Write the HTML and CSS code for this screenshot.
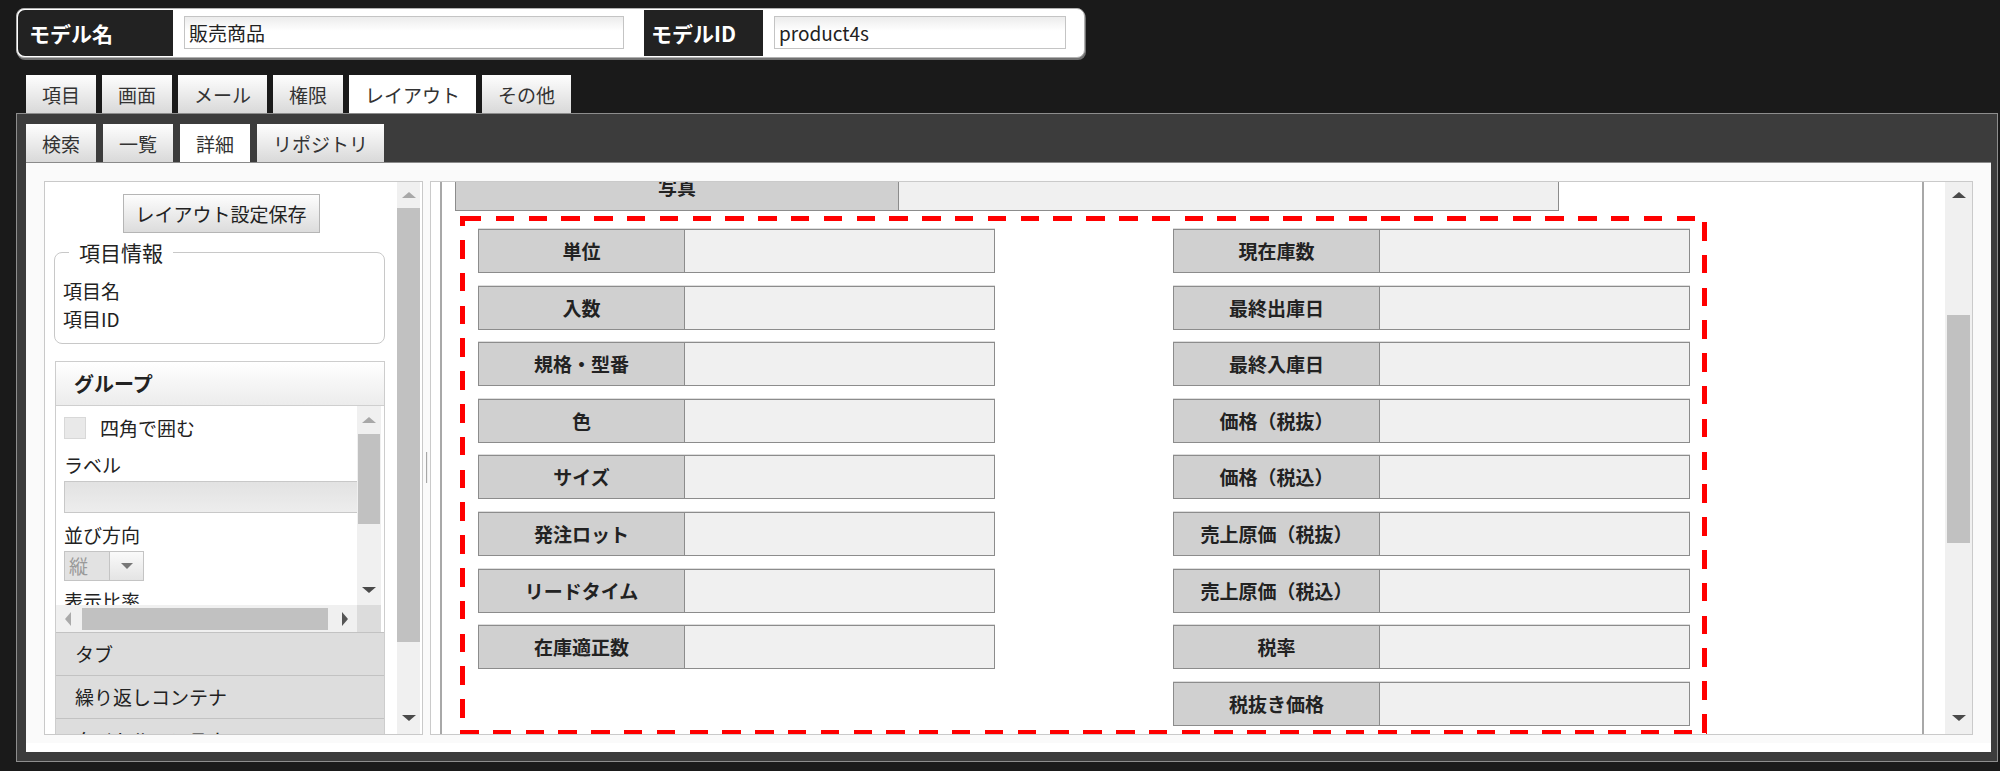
FILE: index.html
```html
<!DOCTYPE html>
<html lang="ja">
<head>
    <meta charset="UTF-8">
    <title>レイアウト</title>
    <link rel="stylesheet" href="styles.css">
</head>
<body>
    <div class="model-bar">
        <div class="model-label name-label">モデル名</div>
        <div class="model-input name-input">販売商品</div>
        <div class="model-label id-label">モデルID</div>
        <div class="model-input id-input">product4s</div>
    </div>

    <ul class="tabs main-tabs">
        <li class="tab">項目</li>
        <li class="tab">画面</li>
        <li class="tab">メール</li>
        <li class="tab">権限</li>
        <li class="tab active">レイアウト</li>
        <li class="tab">その他</li>
    </ul>

    <div class="panel">
        <ul class="tabs sub-tabs">
            <li class="tab">検索</li>
            <li class="tab">一覧</li>
            <li class="tab active">詳細</li>
            <li class="tab">リポジトリ</li>
        </ul>

        <div class="workspace">
            <div class="work-inner">
                <!-- left settings panel -->
                <div class="side">
                    <div class="side-body">
                        <button class="save-btn">レイアウト設定保存</button>

                        <fieldset class="info">
                            <legend>項目情報</legend>
                            <div class="info-line">項目名</div>
                            <div class="info-line">項目ID</div>
                        </fieldset>

                        <div class="group">
                            <div class="group-head">グループ</div>
                            <div class="group-body">
                                <div class="group-scroll">
                                    <div class="check-row">
                                        <span class="checkbox"></span>
                                        <span>四角で囲む</span>
                                    </div>
                                    <div class="field-label">ラベル</div>
                                    <div class="text-field"></div>
                                    <div class="field-label">並び方向</div>
                                    <div class="select">
                                        <span class="select-value">縦</span>
                                        <span class="select-arrow"></span>
                                    </div>
                                    <div class="field-label last">表示比率</div>
                                </div>
                                <div class="sb small">
                                    <div class="sb-btn up off"></div>
                                    <div class="sb-thumb"></div>
                                    <div class="sb-btn down"></div>
                                </div>
                                <div class="hsb">
                                    <div class="hsb-btn left off"></div>
                                    <div class="hsb-thumb"></div>
                                    <div class="hsb-btn right"></div>
                                </div>
                                <div class="corner"></div>
                            </div>
                            <div class="acc-head">タブ</div>
                            <div class="acc-head">繰り返しコンテナ</div>
                            <div class="acc-head">タイトルコンテナ</div>
                        </div>
                    </div>
                    <div class="sb side-sb">
                        <div class="sb-btn up off"></div>
                        <div class="sb-thumb"></div>
                        <div class="sb-btn down"></div>
                    </div>
                </div>

                <div class="splitter"><span class="grip"></span></div>

                <!-- layout canvas -->
                <div class="stage">
                    <div class="viewport">
                        <div class="canvas">
                            <div class="photo-row">
                                <div class="lbl">写真</div>
                                <div class="val"></div>
                            </div>

                            <div class="dash-box">
                                <div class="field-col">
                                    <div class="field-row"><div class="lbl">単位</div></div>
                                    <div class="field-row"><div class="lbl">入数</div></div>
                                    <div class="field-row"><div class="lbl">規格・型番</div></div>
                                    <div class="field-row"><div class="lbl">色</div></div>
                                    <div class="field-row"><div class="lbl">サイズ</div></div>
                                    <div class="field-row"><div class="lbl">発注ロット</div></div>
                                    <div class="field-row"><div class="lbl">リードタイム</div></div>
                                    <div class="field-row"><div class="lbl">在庫適正数</div></div>
                                </div>
                                <div class="field-col">
                                    <div class="field-row"><div class="lbl">現在庫数</div></div>
                                    <div class="field-row"><div class="lbl">最終出庫日</div></div>
                                    <div class="field-row"><div class="lbl">最終入庫日</div></div>
                                    <div class="field-row"><div class="lbl">価格（税抜）</div></div>
                                    <div class="field-row"><div class="lbl">価格（税込）</div></div>
                                    <div class="field-row"><div class="lbl">売上原価（税抜）</div></div>
                                    <div class="field-row"><div class="lbl">売上原価（税込）</div></div>
                                    <div class="field-row"><div class="lbl">税率</div></div>
                                    <div class="field-row"><div class="lbl">税抜き価格</div></div>
                                </div>
                            </div>
                        </div>
                    </div>
                    <div class="sb main-sb">
                        <div class="sb-btn up"></div>
                        <div class="sb-thumb"></div>
                        <div class="sb-btn down"></div>
                    </div>
                </div>
            </div>
        </div>
    </div>
</body>
</html>
```

FILE: styles.css
```css
* {
    box-sizing: border-box;
}

body {
    margin: 0;
    width: 2000px;
    height: 771px;
    overflow: hidden;
    background-color: #1a1a1a;
    font-family: "Noto Sans CJK JP", "Liberation Sans", sans-serif;
    font-size: 19px;
    color: #222;
}

/* header */
.model-bar {
    display: flex;
    align-items: flex-start;
    margin: 8px 0 0 16px;
    width: 1069px;
    height: 50px;
    padding: 1px;
    background: #fff;
    border: 1px solid #b0b0b0;
    border-radius: 8px;
    box-shadow: 1px 2px 0 #707070;
}

.model-label {
    height: 46px;
    line-height: 46px;
    padding-left: 11px;
    background: #222;
    color: #fff;
    font-weight: bold;
    font-size: 21px;
}

.name-label {
    width: 155px;
    border-radius: 7px 0 0 7px;
}

.id-label {
    width: 119px;
    margin-left: 20px;
    padding-left: 7px;
}

.model-input {
    margin: 6px 0 0 11px;
    height: 33px;
    line-height: 31px;
    padding-left: 4px;
    border: 1px solid #c4c4c4;
    background: linear-gradient(#ececec, #fff 45%);
    color: #222;
}

.name-input {
    width: 440px;
}

.id-input {
    width: 292px;
}

/* tabs */
.tabs {
    list-style: none;
    margin: 0;
    padding: 0;
    display: flex;
    gap: 6px;
}

.main-tabs {
    margin: 17px 0 0 26px;
}

.sub-tabs {
    gap: 7px;
}

.tab {
    height: 38px;
    padding: 0 16px;
    display: flex;
    align-items: center;
    background: linear-gradient(#fefefe, #d9d9d9);
    color: #333;
}

.tab.active {
    background: #fff;
}

/* panel */
.panel {
    margin-left: 16px;
    width: 1982px;
    height: 649px;
    padding: 10px 6px 9px 9px;
    border: 1px solid #8d8d8d;
    background: #3c3c3c;
}

.workspace {
    height: 590px;
    padding-bottom: 9px;
    background: #fff;
    border-top: 1px solid #8a8a8a;
}

.work-inner {
    display: flex;
    height: 100%;
    padding: 18px 18px 8px 18px;
    background: #fafafa;
}

/* left side */
.side {
    display: flex;
    width: 379px;
    padding-right: 2px;
    border: 1px solid #c9c9c9;
    background: #fff;
    overflow: hidden;
}

.side-body {
    flex: 1;
    overflow: hidden;
}

.save-btn {
    display: block;
    margin: 12px auto 0;
    width: 197px;
    height: 39px;
    padding: 0;
    border: 1px solid #b5b5b5;
    background: linear-gradient(#fdfdfd, #dcdcdc);
    font-family: inherit;
    font-size: 19px;
    color: #222;
}

.info {
    margin: 8px 12px 0 9px;
    padding: 14px 8px 10px;
    min-width: 0;
    border: 1px solid #c8c8c8;
    border-radius: 8px;
}

.info legend {
    margin-left: 6px;
    padding: 0 10px;
    font-size: 21px;
    line-height: 22px;
}

.info-line {
    line-height: 28px;
}

.group {
    margin: 17px 12px 0 10px;
    border: 1px solid #cdcdcd;
}

.group-head {
    height: 44px;
    line-height: 43px;
    padding-left: 18px;
    border-bottom: 1px solid #cfcfcf;
    background: linear-gradient(#fff, #ececec);
    font-weight: bold;
    font-size: 20px;
}

.group-body {
    display: grid;
    grid-template-columns: 1fr 24px;
    grid-template-rows: 1fr 27px;
    height: 226px;
    padding-right: 3px;
}

.group-scroll {
    overflow: hidden;
    padding-left: 8px;
}

.check-row {
    display: flex;
    align-items: center;
    gap: 14px;
    margin-top: 11px;
    height: 22px;
    line-height: 22px;
}

.checkbox {
    width: 22px;
    height: 22px;
    border: 1px solid #d8d8d8;
    background: #e9e9e9;
}

.field-label {
    margin-top: 13px;
    line-height: 26px;
    white-space: nowrap;
}

.text-field + .field-label {
    margin-top: 9px;
}

.field-label.last {
    margin-top: 7px;
}

.text-field {
    margin-top: 3px;
    width: 330px;
    height: 32px;
    border: 1px solid #c8c8c8;
    background: linear-gradient(#e2e2e2, #ededed);
}

.select {
    display: flex;
    margin-top: 3px;
    width: 80px;
    height: 30px;
    border: 1px solid #c4c4c4;
    background: #e2e2e2;
}

.select-value {
    width: 45px;
    padding-left: 4px;
    line-height: 28px;
    border-right: 1px solid #c4c4c4;
    color: #9a9a9a;
}

.select-arrow {
    flex: 1;
    display: flex;
    align-items: center;
    justify-content: center;
    background: linear-gradient(#fafafa, #e4e4e4);
}

.select-arrow::before {
    content: "";
    border-left: 6px solid transparent;
    border-right: 6px solid transparent;
    border-top: 6px solid #777;
}

.acc-head {
    height: 43px;
    line-height: 42px;
    padding-left: 19px;
    border-top: 1px solid #c2c2c2;
    background: #dddddd;
    white-space: nowrap;
}

/* scrollbars */
.sb {
    display: flex;
    flex-direction: column;
    background: #f0f0f0;
}

.sb-btn {
    height: 26px;
    display: flex;
    align-items: center;
    justify-content: center;
    color: #4a4a4a;
}

.sb-btn.off {
    color: #a8a8a8;
}

.sb-btn.up::before {
    content: "";
    border-left: 7px solid transparent;
    border-right: 7px solid transparent;
    border-bottom: 6px solid currentColor;
}

.sb-btn.down {
    margin-top: auto;
}

.sb-btn.down::before {
    content: "";
    border-left: 7px solid transparent;
    border-right: 7px solid transparent;
    border-top: 6px solid currentColor;
}

.sb-thumb {
    background: #c1c1c1;
}

.side-sb {
    width: 23px;
    padding-bottom: 3px;
}

.side-sb .sb-thumb {
    height: 434px;
}

.small .sb-btn.up {
    height: 28px;
}

.small .sb-thumb {
    height: 90px;
    margin: 0 1px;
}

.small .sb-btn.down {
    padding-bottom: 4px;
}

.hsb {
    display: flex;
    align-items: center;
    background: #f0f0f0;
}

.hsb-btn {
    width: 24px;
    height: 100%;
    display: flex;
    align-items: center;
    justify-content: center;
    color: #555;
}

.hsb-btn.off {
    color: #aaa;
}

.hsb-btn.left::before {
    content: "";
    border-top: 7px solid transparent;
    border-bottom: 7px solid transparent;
    border-right: 6px solid currentColor;
}

.hsb-btn.right {
    margin-left: auto;
}

.hsb-btn.right::before {
    content: "";
    border-top: 7px solid transparent;
    border-bottom: 7px solid transparent;
    border-left: 6px solid currentColor;
}

.hsb-thumb {
    margin-left: 2px;
    width: 246px;
    height: 22px;
    background: #c1c1c1;
}

.corner {
    background: #dcdcdc;
}

/* splitter */
.splitter {
    width: 7px;
    display: flex;
    justify-content: center;
    align-items: center;
}

.grip {
    margin-top: 18px;
    width: 1px;
    height: 31px;
    background: #a8a8a8;
    box-shadow: 1px 0 0 #eee;
}

/* layout stage */
.stage {
    flex: 1;
    display: flex;
    border: 1px solid #cacaca;
    background: #fff;
}

.viewport {
    flex: 1;
    overflow: hidden;
}

.main-sb {
    width: 27px;
    padding-bottom: 3px;
}

.main-sb .sb-thumb {
    margin: 107px 2px 0;
    height: 228px;
}

.canvas {
    margin: -15px 0 0 9px;
    width: 1484px;
    height: 800px;
    padding-left: 13px;
    border-left: 2px solid #a8a8a8;
    border-right: 2px solid #a8a8a8;
}

.photo-row,
.field-row {
    display: flex;
    height: 44px;
    border: 1px solid #8c8c8c;
    background: #f0f0f0;
    box-shadow: 0 -1px 0 #dedede;
}

.photo-row {
    width: 1104px;
}

.lbl {
    width: 206px;
    border-right: 1px solid #8c8c8c;
    background: #d0d0d0;
    text-align: center;
    line-height: 42px;
    font-weight: bold;
    white-space: nowrap;
}

.photo-row .lbl {
    width: 443px;
    line-height: 37px;
}

.dash-box {
    display: flex;
    justify-content: space-between;
    align-items: flex-start;
    margin: 5px 0 0 5px;
    width: 1247px;
    padding: 13px 17px 9px 18px;
    background:
        repeating-linear-gradient(to right, transparent 0 3px, #f00 3px 21.5px, transparent 21.5px 32.8px) 0 0 / 100% 5px no-repeat,
        repeating-linear-gradient(to right, #f00 0 18.5px, transparent 18.5px 32.8px) 0 100% / 100% 5px no-repeat,
        repeating-linear-gradient(to bottom, #f00 0 9.8px, transparent 9.8px 24px, #f00 24px 32.8px) 0 0 / 5px 100% no-repeat,
        repeating-linear-gradient(to bottom, transparent 0 6px, #f00 6px 24.5px, transparent 24.5px 32.8px) 100% 0 / 5px 100% no-repeat,
        linear-gradient(#f00, #f00) 0 0 / 5px 5px no-repeat;
}

.field-col {
    display: flex;
    flex-direction: column;
    gap: 12.6px;
    width: 517px;
}
```
